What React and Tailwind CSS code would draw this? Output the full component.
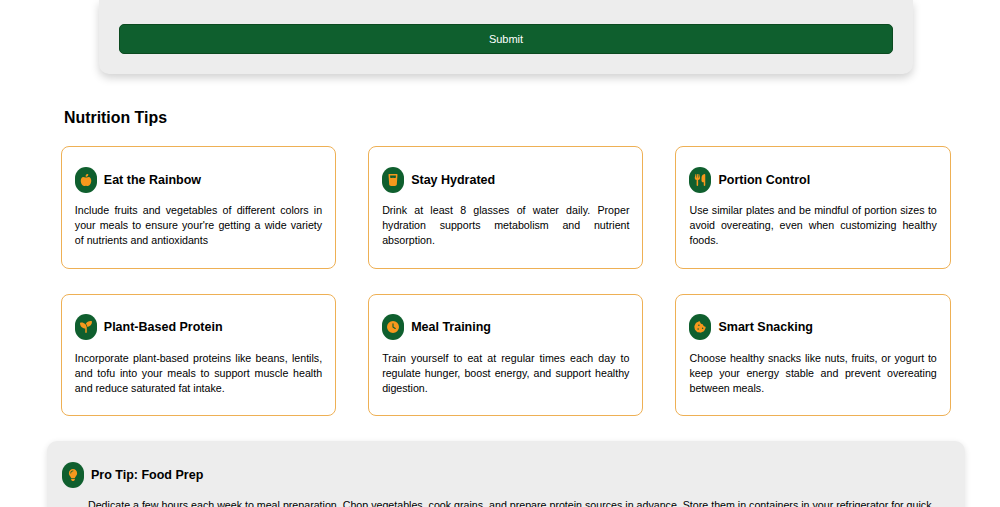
import { FaAppleWhole, FaGlassWater, FaUtensils, FaSeedling, FaClock, FaCookieBite, FaLightbulb } from "react-icons/fa6";

const TIPS = [
  { id: "rainbow", icon: FaAppleWhole, title: "Eat the Rainbow", text: "Include fruits and vegetables of different colors in your meals to ensure your're getting a wide variety of nutrients and antioxidants" },
  { id: "hydrated", icon: FaGlassWater, title: "Stay Hydrated", text: "Drink at least 8 glasses of water daily. Proper hydration supports metabolism and nutrient absorption." },
  { id: "portion", icon: FaUtensils, title: "Portion Control", text: "Use similar plates and be mindful of portion sizes to avoid overeating, even when customizing healthy foods." },
  { id: "protein", icon: FaSeedling, title: "Plant-Based Protein", text: "Incorporate plant-based proteins like beans, lentils, and tofu into your meals to support muscle health and reduce saturated fat intake." },
  { id: "training", icon: FaClock, title: "Meal Training", text: "Train yourself to eat at regular times each day to regulate hunger, boost energy, and support healthy digestion." },
  { id: "snacking", icon: FaCookieBite, title: "Smart Snacking", text: "Choose healthy snacks like nuts, fruits, or yogurt to keep your energy stable and prevent overeating between meals." },
];

function TipIcon({ icon: Icon }) {
  return (
    <div className="w-[22px] h-[26px] rounded-full bg-[#0f5f2e] flex items-center justify-center shrink-0">
      <Icon className="text-[#f7981d] text-[12px]" />
    </div>
  );
}

export default function App() {
  return (
    <div className="h-[507px] overflow-hidden bg-white text-black font-['Liberation_Sans',Arial,sans-serif]">
      {/* Form panel, scrolled off the top */}
      <div className="ml-[99px] w-[814px] h-[74px] pt-6 px-5 bg-[#ededed] rounded-b-[10px] shadow-[0_4px_8px_rgba(0,0,0,0.18)]">
        <button type="button" className="w-full h-[30px] bg-[#0f5f2e] border border-[#0b4a20] rounded-[5px] text-white text-[11px]">
          Submit
        </button>
      </div>

      <h2 className="ml-[64px] mt-[33.5px] text-[15.9px] leading-[20px] font-bold">Nutrition Tips</h2>

      {/* Tip cards */}
      <div className="ml-[60.8px] mt-[18.5px] w-[890px] grid grid-cols-3 gap-x-[32px] gap-y-[25px]">
        {TIPS.map(tip => (
          <div key={tip.id} className="h-[122.5px] bg-white border border-[#eeb055] rounded-[8px] pt-[19.5px] px-[13px]">
            <div className="flex items-center gap-[7px] mb-[10.5px]">
              <TipIcon icon={tip.icon} />
              <h3 className="text-[12.5px] font-bold leading-[26px]">{tip.title}</h3>
            </div>
            <p className="text-[10.67px] leading-[15px] text-justify">{tip.text}</p>
          </div>
        ))}
      </div>

      {/* Pro tip */}
      <div className="ml-[47px] mt-[25px] w-[918px] h-[120px] bg-[#ededed] rounded-[10px] shadow-[0_2px_6px_rgba(0,0,0,0.12)] pt-[20.5px] pl-[15px] pr-[28px]">
        <div className="flex items-center gap-[7px]">
          <TipIcon icon={FaLightbulb} />
          <h3 className="text-[12.5px] font-bold leading-[26px]">Pro Tip: Food Prep</h3>
        </div>
        <p className="ml-[26px] mt-[10px] text-[10.67px] leading-[15px]">
          Dedicate a few hours each week to meal preparation. Chop vegetables, cook grains, and prepare protein sources in advance. Store them in containers in your refrigerator for quick
        </p>
      </div>
    </div>
  );
}
